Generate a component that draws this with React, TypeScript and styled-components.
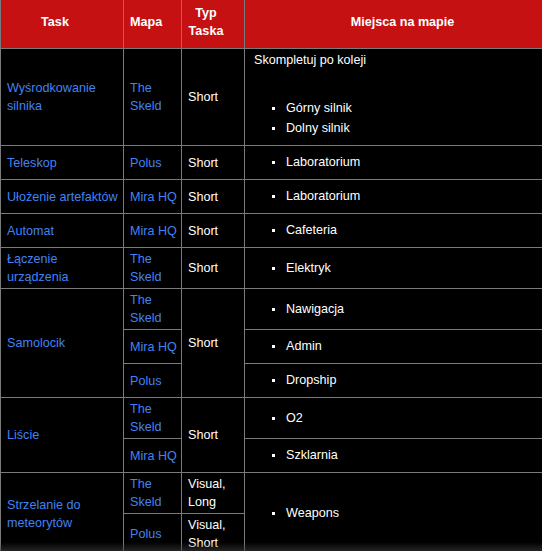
import React from "react";
import styled, { createGlobalStyle } from "styled-components";

const GlobalStyle = createGlobalStyle`
  html, body { margin: 0; padding: 0; background: #000; overflow: hidden; }
`;

const Frame = styled.div`
  position: relative;
  width: 542px;
  height: 551px;
  overflow: hidden;
  background: #000;
`;

const Fade = styled.div`
  position: absolute;
  left: 0;
  right: 0;
  bottom: 0;
  height: 9px;
  background: linear-gradient(to bottom, rgba(60, 60, 60, 0), rgba(60, 60, 60, 0.6));
  pointer-events: none;
`;

const Table = styled.table`
  width: 574px;
  table-layout: fixed;
  border-collapse: collapse;
  background: #000;
  color: #fff;
  font-family: "Liberation Sans", Arial, sans-serif;
  font-size: 12.6px;
  line-height: 18px;
`;

const Col = styled.col<{ $w: number }>`
  width: ${(p) => p.$w}px;
`;

const Th = styled.th`
  background: #c51111;
  color: #fff;
  font-weight: bold;
  text-align: center;
  vertical-align: middle;
  border: 1px solid #7a7a7a;
  border-top: none;
  padding: 3.5px 20px 8.5px 6px;
`;

const Td = styled.td<{ $place?: boolean; $top?: boolean }>`
  border: 1px solid #7a7a7a;
  vertical-align: ${(p) => (p.$top ? "top" : "middle")};
  padding: 2px 4px 2px ${(p) => (p.$place ? 9 : 6)}px;
  text-align: left;
`;

const Link = styled.a`
  color: #4183f5;
  text-decoration: none;
`;

const Intro = styled.div`
  margin-bottom: 25px;
`;

const List = styled.ul`
  display: flex;
  flex-direction: column;
  gap: 2px;
  margin: 0;
  padding: 5px 0 6px 18px;
  list-style: none;
`;

const Item = styled.li`
  &::before {
    content: "";
    display: inline-block;
    width: 3px;
    height: 3px;
    background: #fff;
    margin-right: 11px;
    vertical-align: middle;
  }
`;

const Places = ({ items }: { items: string[] }) => (
  <List>
    {items.map((i) => (
      <Item key={i}>{i}</Item>
    ))}
  </List>
);

export default function App() {
  return (
    <Frame>
      <GlobalStyle />
      <Table>
        <colgroup>
          <Col $w={123} />
          <Col $w={58} />
          <Col $w={63} />
          <Col $w={330} />
        </colgroup>
        <thead>
          <tr>
            <Th>Task</Th>
            <Th>Mapa</Th>
            <Th>Typ Taska</Th>
            <Th>Miejsca na mapie</Th>
          </tr>
        </thead>
        <tbody>
          <tr>
            <Td><Link>Wyśrodkowanie silnika</Link></Td>
            <Td><Link>The Skeld</Link></Td>
            <Td>Short</Td>
            <Td $place $top>
              <Intro>Skompletuj po koleji</Intro>
              <Places items={["Górny silnik", "Dolny silnik"]} />
            </Td>
          </tr>
          <tr>
            <Td><Link>Teleskop</Link></Td>
            <Td><Link>Polus</Link></Td>
            <Td>Short</Td>
            <Td $place><Places items={["Laboratorium"]} /></Td>
          </tr>
          <tr>
            <Td><Link>Ułożenie artefaktów</Link></Td>
            <Td><Link>Mira HQ</Link></Td>
            <Td>Short</Td>
            <Td $place><Places items={["Laboratorium"]} /></Td>
          </tr>
          <tr>
            <Td><Link>Automat</Link></Td>
            <Td><Link>Mira HQ</Link></Td>
            <Td>Short</Td>
            <Td $place><Places items={["Cafeteria"]} /></Td>
          </tr>
          <tr>
            <Td><Link>Łączenie urządzenia</Link></Td>
            <Td><Link>The Skeld</Link></Td>
            <Td>Short</Td>
            <Td $place><Places items={["Elektryk"]} /></Td>
          </tr>
          <tr>
            <Td rowSpan={3}><Link>Samolocik</Link></Td>
            <Td><Link>The Skeld</Link></Td>
            <Td rowSpan={3}>Short</Td>
            <Td $place><Places items={["Nawigacja"]} /></Td>
          </tr>
          <tr>
            <Td><Link>Mira HQ</Link></Td>
            <Td $place><Places items={["Admin"]} /></Td>
          </tr>
          <tr>
            <Td><Link>Polus</Link></Td>
            <Td $place><Places items={["Dropship"]} /></Td>
          </tr>
          <tr>
            <Td rowSpan={2}><Link>Liście</Link></Td>
            <Td><Link>The Skeld</Link></Td>
            <Td rowSpan={2}>Short</Td>
            <Td $place><Places items={["O2"]} /></Td>
          </tr>
          <tr>
            <Td><Link>Mira HQ</Link></Td>
            <Td $place><Places items={["Szklarnia"]} /></Td>
          </tr>
          <tr>
            <Td rowSpan={2}><Link>Strzelanie do meteorytów</Link></Td>
            <Td><Link>The Skeld</Link></Td>
            <Td>Visual, Long</Td>
            <Td rowSpan={2} $place><Places items={["Weapons"]} /></Td>
          </tr>
          <tr>
            <Td><Link>Polus</Link></Td>
            <Td>Visual, Short</Td>
          </tr>
        </tbody>
      </Table>
      <Fade />
    </Frame>
  );
}
